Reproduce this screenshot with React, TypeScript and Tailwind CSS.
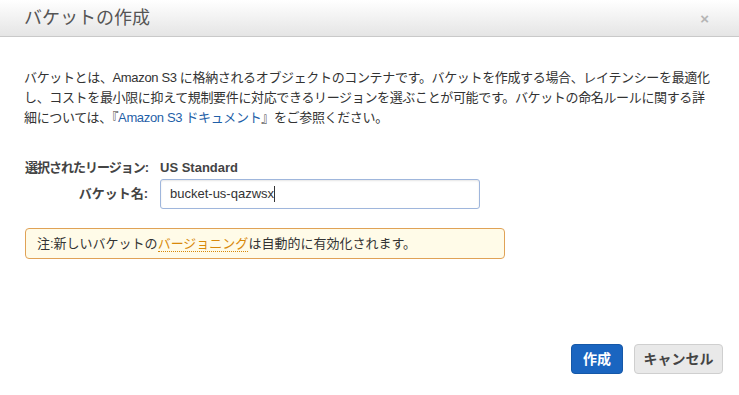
const FONT = { fontFamily: '"Liberation Sans", "Noto Sans CJK JP", sans-serif' };

export default function App() {
  return (
    <div className="w-[739px] h-[395px] bg-white text-[#333] flex flex-col" style={FONT}>
      {/* ヘッダー */}
      <div className="h-[37px] flex items-center justify-between pl-[24px] pr-[30px] bg-gradient-to-b from-white to-[#e5e5e5] border-b border-[#c9c9c9]">
        <h1 className="text-[18px] font-normal text-[#555] leading-none">バケットの作成</h1>
        <span className="text-[#b5b5b5] text-[15px] font-bold leading-none">×</span>
      </div>

      {/* 本文 */}
      <div className="flex-1 px-[24px] pt-[31px]">
        <p className="text-[13px] leading-[20px] tracking-[-0.35px] whitespace-nowrap">
          バケットとは、Amazon S3 に格納されるオブジェクトのコンテナです。バケットを作成する場合、レイテンシーを最適化
          <br />
          し、コストを最小限に抑えて規制要件に対応できるリージョンを選ぶことが可能です。バケットの命名ルールに関する詳
          <br />
          細については、『<span className="text-[#1f5fa8]">Amazon S3 ドキュメント</span>』をご参照ください。
        </p>

        <div className="mt-[32px] grid grid-cols-[124px_1fr] gap-x-[12px] items-center text-[13px]">
          <div className="text-right font-bold text-[#444] leading-[16px] whitespace-nowrap tracking-[-1px]">選択されたリージョン:</div>
          <div className="font-bold text-[#444] leading-[16px]">US Standard</div>
          <div className="text-right font-bold text-[#444] mt-[3px] whitespace-nowrap">バケット名:</div>
          <div className="mt-[3px]">
            <div className="w-[320px] h-[30px] border border-[#9fb6dc] rounded-[3px] shadow-[inset_0_1px_2px_rgba(0,0,0,0.1)] flex items-center px-[9px] text-[13px] text-[#333]">
              bucket-us-qazwsx<span className="w-px h-[16px] bg-[#333]" />
            </div>
          </div>
        </div>

        <div className="mt-[19px] ml-px w-[480px] h-[31px] border border-[#e0a256] bg-[#fffbe8] rounded-[4px] flex items-center px-[11px] text-[13px]">
          注:新しいバケットの
          <span className="text-[#d8890a] border-b border-dotted border-[#d8890a] leading-[15px]">バージョニング</span>
          は自動的に有効化されます。
        </div>
      </div>

      {/* フッター */}
      <div className="flex justify-end gap-[11px] pr-[16px] pb-[21px]">
        <button className="w-[52px] h-[30px] rounded-[4px] bg-[#1a65c0] border border-[#1558a8] text-white text-[14px] font-bold">
          作成
        </button>
        <button className="w-[89px] h-[30px] rounded-[4px] bg-[#e9e9e9] border border-[#cfcfcf] text-[#444] text-[14px] font-bold">
          キャンセル
        </button>
      </div>
    </div>
  );
}
